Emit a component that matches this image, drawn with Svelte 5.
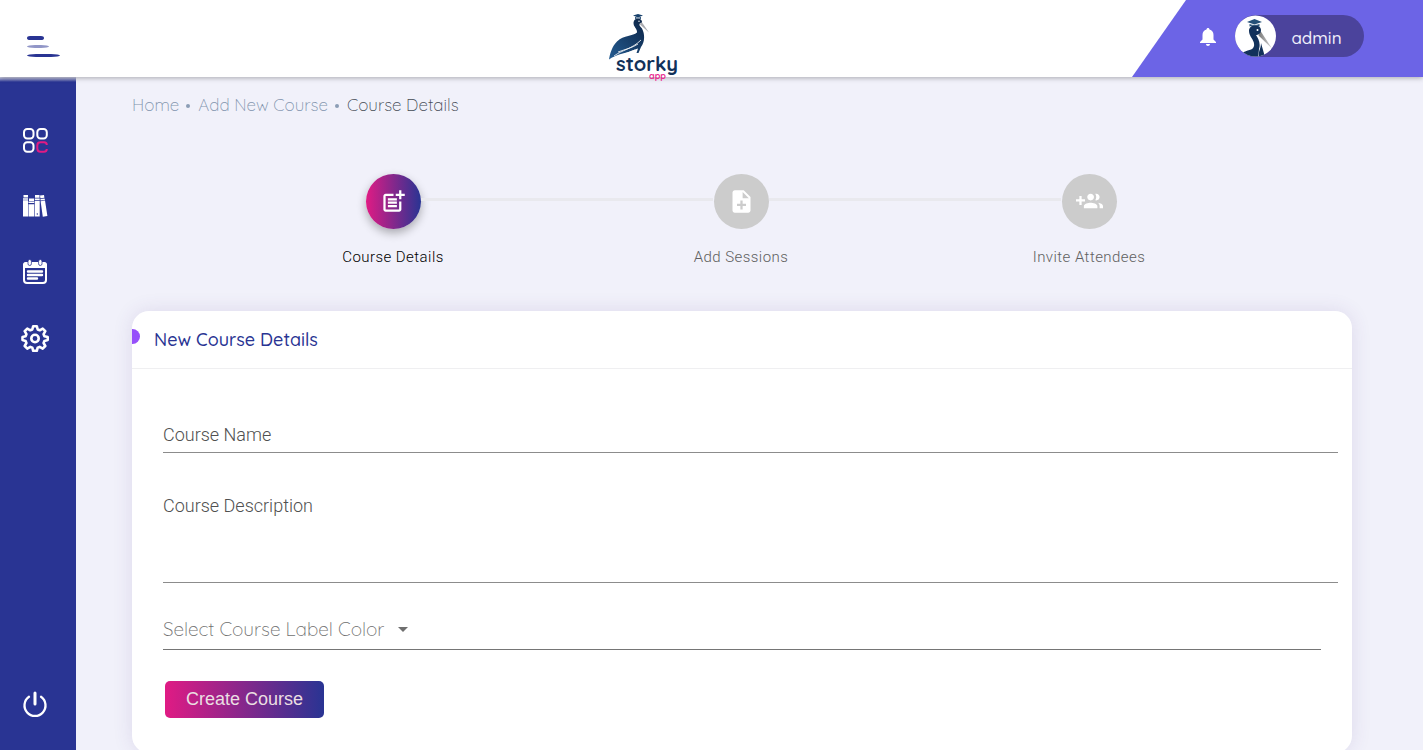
<script>
  let name = $state('');
  let description = $state('');
  let color = $state('');

  const colors = ['Blue', 'Pink', 'Purple', 'Green'];
</script>

<div class="shell">
  <header class="topbar">
    <button class="menu" aria-label="Toggle menu">
      <svg width="34" height="22" viewBox="0 0 34 22">
        <rect x="0" y="0" width="17" height="4" rx="3" ry="2" fill="#293493" />
        <rect x="0" y="9" width="22" height="3" rx="8" ry="1.5" fill="#9196c7" />
        <rect x="0" y="18" width="33" height="3" rx="9" ry="1.5" fill="#293493" />
      </svg>
    </button>

    <a class="logo" href="#home" aria-label="Storky app">
      <svg width="110" height="90" viewBox="0 0 110 90">
        <defs>
          <linearGradient id="plumage" x1="0" y1="1" x2="1" y2="0">
            <stop offset="0" stop-color="#245c92" />
            <stop offset="1" stop-color="#0c2446" />
          </linearGradient>
        </defs>
        <path d="M43 15.500l5-1.500 5 1.500-5 2z" fill="#17406b" />
        <path d="M45 17q3 1.500 6 0v2q-3-1.500-6 0z" fill="#17406b" />
        <path d="M51 21l8 11.500-9-8z" fill="#a9abb0" />
        <path d="M52 22C52 17.500 44 17 43.500 22.500c-.3 4.500 4 6 3.500 10-4 4-13 2-20 9-5 5-7 12-8 18 7-5 15-6 22-8.500 4-1.500 6-2.500 7-2.500l-1.500 4.500h2l2.500-6c4-5 4-13 1-18.500-1.500-2-3-2.500-2.500-4.500.5-1.500 2.500-1 2.500-2z" fill="url(#plumage)" />
        <path d="M24 56C32 50 42 49 51 40M28 52c8-3 14-4 20-8M22 60c8-5 16-7 23-10" fill="none" stroke="#fff" stroke-width="0.800" />
        <circle cx="49" cy="21.300" r="0.700" fill="#fff" />
        <text x="26" y="71" class="word">storky</text>
        <text x="59" y="79" class="sub">app</text>
      </svg>
    </a>

    <div class="account">
      <button class="bell" aria-label="Notifications">
        <svg width="16" height="18" viewBox="0 0 16 18" fill="#fff">
          <path d="M8 0c.9 0 1.500.6 1.500 1.600 2.600.7 4 2.900 4 5.400v4.500L16 14v1H0v-1l2.500-2.500V7c0-2.500 1.400-4.700 4-5.400C6.500.6 7.100 0 8 0zM6 16h4c0 1.200-.9 2-2 2s-2-.8-2-2z" />
        </svg>
      </button>
      <button class="user">
        <svg width="42" height="42" viewBox="0 0 42 42">
          <defs>
            <clipPath id="face"><circle cx="20.500" cy="21" r="20.500" /></clipPath>
            <linearGradient id="beak"><stop offset="0" stop-color="#777" /><stop offset="1" stop-color="#d5d5d5" /></linearGradient>
          </defs>
          <g clip-path="url(#face)">
            <rect width="42" height="42" fill="#fff" />
            <path d="M25.500 16L37 33.500 23.500 20.500z" fill="url(#beak)" />
            <path d="M26 15c0-6-12-7-12 1 0 6 6 9 5 15-1 5-7 3-12 7.500L10 44h13l1-10c2-6-1-11-3-14 2 0 5-1 5-5z" fill="#12315a" />
            <path d="M26 28l4 14h-6c-1-6 2-8 2-14z" fill="#12315a" />
            <path d="M12 7l7.500-3L27 7l-7.500 2.500z" fill="#245078" />
            <path d="M14.500 9q5 2 10 0v2.500q-5-2-10 0z" fill="#245078" />
            <circle cx="22.500" cy="15" r="1" fill="#fff" />
          </g>
        </svg>
        <span>admin</span>
      </button>
    </div>
  </header>

  <div class="body">
    <nav class="sidebar" aria-label="Main">
      <a href="#dashboard" aria-label="Dashboard">
        <svg width="28" height="28" viewBox="0 0 28 28" fill="none" stroke="#fff" stroke-width="2">
          <rect x="3" y="3" width="9.500" height="9.500" rx="3.200" />
          <rect x="16.300" y="3" width="9.500" height="9.500" rx="3.200" />
          <rect x="3" y="16.300" width="9.500" height="9.500" rx="3.200" />
          <path d="M25.800 19c0-1.700-1.200-2.700-2.800-2.700h-3.500c-2 0-3.200 1.200-3.200 3.200v3.100c0 2 1.200 3.200 3.200 3.200H23c1.600 0 2.800-1 2.800-2.700" stroke="#e01b84" />
        </svg>
      </a>
      <a href="#courses" aria-label="Courses">
        <svg width="28" height="28" viewBox="0 0 28 28" fill="#fff">
          <path d="M2.500 3H7v2.500H2.500zM2 6.200h5v1.500H2zM2 8.300h5v16.200H2zM8 6.500h5V9H8zM7.500 9.600h5.700v1.500H7.500zM7.500 12.200h5.700v12.300H7.500zM14 3h4.500v2.800H14zM13.800 6.500h4.900V8h-4.900zM13.800 8.700h4.900v15.800h-4.900z" />
          <path d="M19 3.500l4-.5.400 2.700-4 .6zM19.400 7l4.200-.6.300 1.500-4.200.6zM19.600 9.200l4.400-.6 2.400 15.300-4.600.9z" />
          <circle cx="16.300" cy="22" r="0.700" fill="#293493" />
        </svg>
      </a>
      <a href="#schedule" aria-label="Schedule">
        <svg width="28" height="28" viewBox="0 0 28 28">
          <rect x="3" y="5" width="22" height="20" rx="3" fill="none" stroke="#fff" stroke-width="2" />
          <path d="M2 10V7a3 3 0 0 1 3-3h18a3 3 0 0 1 3 3v3z" fill="#fff" />
          <rect x="7" y="1.500" width="3.400" height="6" rx="1.700" fill="#fff" stroke="#293493" stroke-width="0.800" />
          <rect x="17.600" y="1.500" width="3.400" height="6" rx="1.700" fill="#fff" stroke="#293493" stroke-width="0.800" />
          <path d="M7 13.500h14M7 17h14M7 20.500h9" stroke="#fff" stroke-width="2.400" stroke-linecap="round" />
        </svg>
      </a>
      <a href="#settings" aria-label="Settings">
        <svg width="28" height="28" viewBox="0 0 28 28" fill="none" stroke="#fff" stroke-width="2.600" stroke-linejoin="round">
          <path d="M12.200 2.200h3.600l.9 3.300 2 .8 3-1.700 2.600 2.600-1.700 3 .8 2 3.300.9v3l-3.300.9-.8 2 1.700 3-2.600 2.600-3-1.700-2 .8-.9 3.100h-3.600l-.9-3.100-2-.8-3 1.700L3.700 22l1.700-3-.8-2-3.100-.9v-3l3.100-.9.8-2-1.700-3 2.600-2.600 3 1.700 2-.8z" />
          <circle cx="14" cy="14.500" r="3.700" />
        </svg>
      </a>
      <a class="power" href="#logout" aria-label="Log out">
        <svg width="28" height="28" viewBox="0 0 28 28" fill="none" stroke="#fff" stroke-linecap="round">
          <path d="M8 6.800a10.500 10.500 0 1 0 12 0" stroke-width="2.300" />
          <path d="M14 3v11" stroke-width="3" />
        </svg>
      </a>
    </nav>

    <main>
      <nav class="crumbs" aria-label="Breadcrumb">
        <a href="#home">Home</a>
        <i></i>
        <a href="#add">Add New Course</a>
        <i></i>
        <span>Course Details</span>
      </nav>

      <ol class="steps">
        <li class="active">
          <span class="dot">
            <svg width="27" height="27" viewBox="0 0 24 24" fill="#fff">
              <path d="M17 19.220H5V7h7V5H5c-1.100 0-2 .9-2 2v12c0 1.100.9 2 2 2h12c1.100 0 2-.9 2-2v-7h-2v7.220z" />
              <path d="M19 2h-2v3h-3c.01.010 0 2 0 2h3v2.990c.010.010 2 0 2 0V7h3V5h-3V2zM7 9h8v2H7zM7 12v2h8v-2h-3zM7 15h8v2H7z" />
            </svg>
          </span>
          <span class="caption">Course Details</span>
        </li>
        <li>
          <span class="dot">
            <svg width="27" height="27" viewBox="0 0 24 24" fill="#fff">
              <path d="M14 2H6c-1.100 0-1.990.9-1.990 2L4 20c0 1.100.890 2 1.990 2H18c1.100 0 2-.9 2-2V8l-6-6zm2 14h-3v3h-2v-3H8v-2h3v-3h2v3h3v2zm-3-7V3.500L18.500 9H13z" />
            </svg>
          </span>
          <span class="caption">Add Sessions</span>
        </li>
        <li>
          <span class="dot">
            <svg width="27" height="27" viewBox="0 0 24 24" fill="#fff">
              <path d="M8 10H5V7H3v3H0v2h3v3h2v-3h3v-2zm10 1c1.660 0 2.990-1.340 2.990-3S19.660 5 18 5c-.320 0-.630.050-.910.140.570.810.900 1.790.900 2.860s-.340 2.040-.900 2.860c.280.090.590.140.910.140zm-5 0c1.660 0 2.990-1.340 2.990-3S14.660 5 13 5s-3 1.340-3 3 1.340 3 3 3zm6.620 2.160c.830.730 1.380 1.660 1.380 2.840v2h3v-2c0-1.540-2.370-2.490-4.380-2.840zM13 13c-2 0-6 1-6 3v2h12v-2c0-2-4-3-6-3z" />
            </svg>
          </span>
          <span class="caption">Invite Attendees</span>
        </li>
      </ol>

      <section class="card">
        <h1>New Course Details</h1>
        <form onsubmit={(e) => e.preventDefault()}>
          <div class="field">
            <label for="name" class:filled={name}>Course Name</label>
            <input id="name" type="text" bind:value={name} />
          </div>
          <div class="field area">
            <label for="description" class:filled={description}>Course Description</label>
            <textarea id="description" bind:value={description}></textarea>
          </div>
          <div class="picker">
            <select aria-label="Select Course Label Color" bind:value={color}>
              <option value="">Select Course Label Color</option>
              {#each colors as c}
                <option value={c}>{c}</option>
              {/each}
            </select>
            <svg width="10" height="5" viewBox="0 0 10 5" fill="#6f6f6f"><path d="M0 0h10L5 5z" /></svg>
          </div>
          <button class="submit" type="submit">Create Course</button>
        </form>
      </section>
    </main>
  </div>
</div>

<style>
  :global(body) {
    margin: 0;
  }

  .shell {
    --round: Quicksand, Lato, sans-serif;
    --navy: #293493;
    height: 100vh;
    display: grid;
    grid-template-rows: 77px minmax(0, 1fr);
    font-family: Roboto, sans-serif;
    background: #f1f1fa;
  }

  button {
    border: 0;
    background: none;
    padding: 0;
    font: inherit;
    cursor: pointer;
  }

  svg {
    display: block;
  }

  a {
    color: inherit;
    text-decoration: none;
  }

  .topbar {
    display: grid;
    grid-template-columns: 158px 1fr 291px;
    background: #fff;
    box-shadow: 0 1px 5px rgba(0, 0, 0, 0.3);
    z-index: 1;
  }

  .menu {
    justify-self: start;
    align-self: start;
    padding: 36px 27px 0;
  }

  .logo {
    height: 77px;
    justify-self: center;
  }

  .word {
    font: 700 20px Quicksand, Lato, sans-serif;
    fill: #12315a;
  }

  .sub {
    font: 700 9px Quicksand, Lato, sans-serif;
    fill: #ea2a90;
  }

  .account {
    box-sizing: border-box;
    display: flex;
    align-items: flex-start;
    justify-content: flex-end;
    gap: 19px;
    padding: 15px 59px 0 0;
    background: #6c64e6;
    clip-path: polygon(54px 0, 100% 0, 100% 100%, 0 100%);
  }

  .bell {
    padding-top: 13px;
  }

  .user {
    display: flex;
    align-items: center;
    width: 129px;
    height: 42px;
    border-radius: 21px;
    background: #4b439c;
    color: #f1f0fb;
    font: 500 17px var(--round);
  }

  .user span {
    flex: 1;
    padding-right: 8px;
    padding-top: 2px;
  }

  .body {
    display: grid;
    grid-template-columns: 76px minmax(0, 1fr);
    min-height: 0;
  }

  .sidebar {
    display: flex;
    flex-direction: column;
    gap: 38px;
    padding: 49px 21px 32px;
    background: linear-gradient(#d5d7ea, var(--navy) 5px);
  }

  .power {
    margin-top: auto;
  }

  main {
    overflow-y: auto;
    scrollbar-width: none;
    padding: 16px 71px 24px 56px;
  }

  .crumbs {
    display: flex;
    align-items: center;
    height: 24px;
    margin-top: -1px;
    color: #8093ad;
    font: 300 17px var(--round);
  }

  .crumbs i {
    width: 4px;
    height: 4px;
    margin: 4px 8px 0 7px;
    border-radius: 50%;
    background: #8c9db5;
  }

  .crumbs span {
    color: #444b55;
  }

  .steps {
    display: grid;
    grid-template-columns: repeat(3, 1fr);
    margin: 58px 89px 0 87px;
    padding: 0;
    list-style: none;
  }

  .steps li {
    position: relative;
    display: flex;
    flex-direction: column;
    align-items: center;
    gap: 18px;
    color: #606060;
  }

  .steps li + li::before {
    content: '';
    position: absolute;
    top: 24px;
    right: calc(50% + 28px);
    width: calc(100% - 56px);
    height: 3px;
    background: #e9e9ee;
  }

  .dot {
    display: grid;
    place-items: center;
    width: 55px;
    height: 55px;
    border-radius: 50%;
    background: #ccc;
  }

  .active .dot {
    background: linear-gradient(90deg, #e01b84, #293493);
    box-shadow: 0 4px 10px rgba(0, 0, 0, 0.3);
  }

  .caption {
    font-size: 15px;
    font-weight: 300;
    line-height: 20px;
    letter-spacing: 0.03em;
  }

  .steps .active {
    color: #000;
  }

  .card {
    margin-top: 44px;
    border-radius: 17px;
    background: #fff;
    box-shadow: 0 0 20px rgba(80, 50, 130, 0.12);
  }

  h1 {
    display: flex;
    align-items: center;
    gap: 14px;
    height: 57px;
    margin: 0;
    border-bottom: 1px solid #efeff1;
    color: var(--navy);
    font: 500 18px/24px var(--round);
  }

  h1::before {
    content: '';
    width: 8px;
    height: 15px;
    margin-bottom: 6px;
    border-radius: 0 8px 8px 0;
    background: #9650fa;
  }

  form {
    display: flex;
    flex-direction: column;
    padding: 50px 14px 35px 31px;
  }

  .field {
    display: grid;
    border-bottom: 1px solid #8c8c8c;
  }

  .field > * {
    grid-area: 1 / 1;
  }

  label {
    padding-top: 4px;
    color: #505050;
    font-size: 18px;
    font-weight: 300;
    line-height: 24px;
  }

  label.filled {
    visibility: hidden;
  }

  input,
  textarea {
    box-sizing: border-box;
    width: 100%;
    height: 33px;
    padding: 4px 0;
    border: 0;
    outline: 0;
    background: transparent;
    resize: none;
    font: 18px/24px Roboto, sans-serif;
  }

  .area {
    margin-top: 37px;
  }

  textarea {
    height: 92px;
  }

  .picker {
    display: flex;
    align-items: center;
    gap: 13px;
    height: 40px;
    margin: 26px 17px 0 0;
    border-bottom: 1px solid #757575;
  }

  select {
    appearance: none;
    padding: 0;
    border: 0;
    outline: 0;
    background: transparent;
    color: #6f6f6f;
    font: 300 19px var(--round);
  }

  .submit {
    align-self: flex-start;
    height: 37px;
    margin: 31px 2px 0;
    padding: 0 21px;
    border-radius: 5px;
    background: linear-gradient(90deg, #e01b84, #293493);
    color: #eadfe2;
    font: 18px "Liberation Sans", sans-serif;
  }
</style>
